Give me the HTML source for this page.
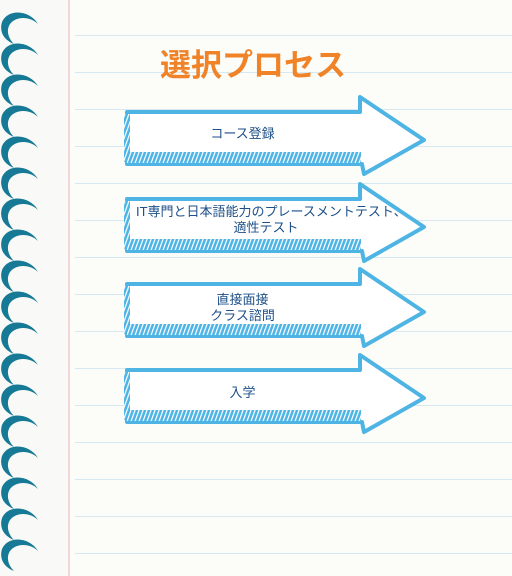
<!DOCTYPE html>
<html><head><meta charset="utf-8"><style>
html,body{margin:0;padding:0}
body{width:512px;height:576px;overflow:hidden;background:#fcfcf9;position:relative;font-family:"Liberation Sans","Noto Sans CJK JP",sans-serif}
.left{position:absolute;left:0;top:0;width:68px;height:576px;background:#f9f9f7}
.margin{position:absolute;left:68px;top:0;width:2px;height:576px;background:#f3d6d8}
.line{position:absolute;left:75px;right:0;height:1px;background:#d6e9f3}
.title{position:absolute;left:160px;width:186px;top:40px;text-align:center;font-size:31px;font-weight:bold;color:#f08328;white-space:nowrap}
.t{position:absolute;left:125px;width:235px;text-align:center;font-size:13px;line-height:16px;color:#1d4f88;white-space:nowrap}
</style></head><body>
<div class="left"></div>
<div class="margin"></div>
<div class="line" style="top:35px"></div>
<div class="line" style="top:72px"></div>
<div class="line" style="top:109px"></div>
<div class="line" style="top:146px"></div>
<div class="line" style="top:183px"></div>
<div class="line" style="top:220px"></div>
<div class="line" style="top:257px"></div>
<div class="line" style="top:294px"></div>
<div class="line" style="top:331px"></div>
<div class="line" style="top:368px"></div>
<div class="line" style="top:405px"></div>
<div class="line" style="top:442px"></div>
<div class="line" style="top:479px"></div>
<div class="line" style="top:516px"></div>
<div class="line" style="top:553px"></div>
<svg width="70" height="576" style="position:absolute;left:0;top:0">
<defs>
<path id="r" d="M38 24 C30 10 8 8 2 22 C-1 32 4 40 14 44 C8 38 6 30 10 24 C16 16 30 16 38 24 Z" fill="#167a96"/>
</defs>
<use href="#r" y="0"/><use href="#r" y="31"/><use href="#r" y="62"/><use href="#r" y="93"/>
<use href="#r" y="124"/><use href="#r" y="155"/><use href="#r" y="186"/><use href="#r" y="217"/>
<use href="#r" y="248"/><use href="#r" y="279"/><use href="#r" y="310"/><use href="#r" y="341"/>
<use href="#r" y="372"/><use href="#r" y="403"/><use href="#r" y="434"/><use href="#r" y="465"/>
<use href="#r" y="496"/><use href="#r" y="527"/>
</svg>
<div class="title">選択プロセス</div>
<svg width="512" height="576" style="position:absolute;left:0;top:0">
<defs>
<pattern id="h" width="4" height="10" patternUnits="userSpaceOnUse" patternTransform="skewX(-20)">
<rect width="4" height="10" fill="#4db4e4"/><rect x="1" width="1.3" height="10" fill="#fff"/>
</pattern>
<g id="a">
<path d="M127 0 L360 0 L360 -15 L424 28 L364 62 L362 52 L127 52 Z" fill="#fff" stroke="#4db4e4" stroke-width="4" stroke-linejoin="round"/>
<rect x="127" y="40" width="234" height="11" fill="url(#h)"/>
<rect x="124" y="2" width="6" height="48" fill="url(#h)"/>
</g>
</defs>
<use href="#a" transform="translate(0,112)"/>
<use href="#a" transform="translate(0,199)"/>
<use href="#a" transform="translate(0,284)"/>
<use href="#a" transform="translate(0,370)"/>
</svg>
<div class="t" style="top:126px">コース登録</div>
<div class="t" style="top:204px;left:136px;width:260px">IT専門と日本語能力のプレースメントテスト、<br>適性テスト</div>
<div class="t" style="top:292px">直接面接<br>クラス諮問</div>
<div class="t" style="top:385px">入学</div>
</body></html>
